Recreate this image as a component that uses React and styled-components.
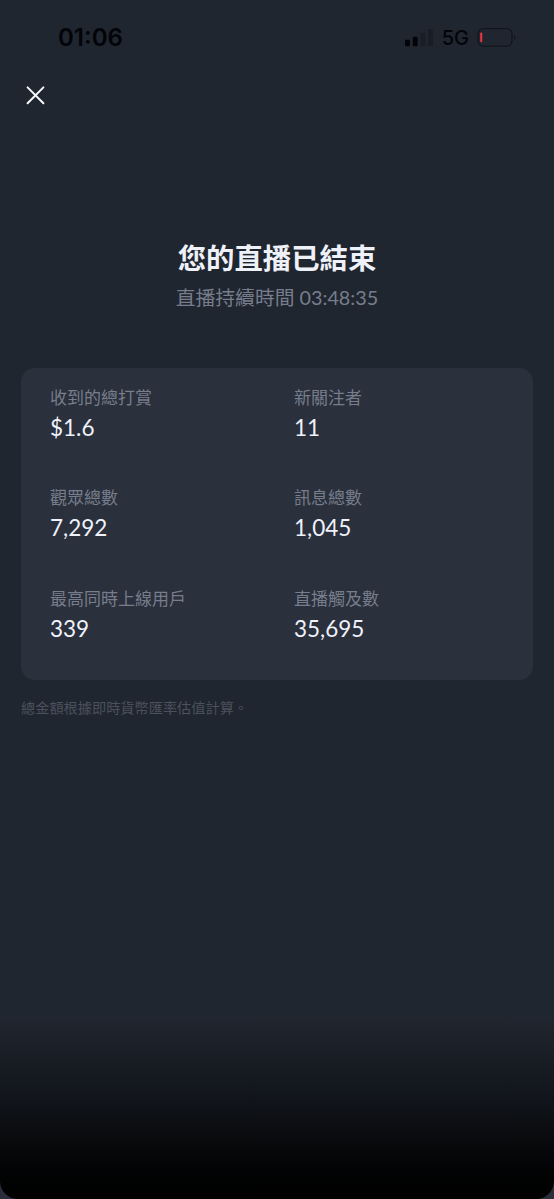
import styled, { createGlobalStyle } from "styled-components";

const GlobalStyle = createGlobalStyle`
  * {
    box-sizing: border-box;
  }
  body {
    margin: 0;
    background: #292d3a;
    font-family: Lato, "Noto Sans CJK TC", sans-serif;
  }
`;

const Screen = styled.main`
  display: flex;
  flex-direction: column;
  height: 1199px;
  overflow: hidden;
  border-radius: 0 0 18px 18px;
  background: linear-gradient(
    to bottom,
    #20262f 0,
    #20262f 1018px,
    #1c2028 1044px,
    #11141b 1100px,
    #090a0c 1142px,
    #020304 1170px,
    #000 1199px
  );
`;

const StatusBar = styled.div`
  display: flex;
  justify-content: space-between;
  align-items: center;
  height: 75px;
  padding: 0 36px 0 58px;
  color: #020409;
  font-family: Inter, sans-serif;
`;

const Clock = styled.span`
  font-size: 24px;
  font-weight: 600;
  line-height: 28px;
`;

const StatusIcons = styled.div`
  display: flex;
  align-items: center;
`;

const Network = styled.span`
  margin: 0 8px 0 8px;
  font-size: 20px;
  font-weight: 500;
  line-height: 24px;
`;

const CloseButton = styled.button`
  display: flex;
  align-self: flex-start;
  margin: 10px 0 0 25px;
  padding: 0;
  border: none;
  background: none;
  color: #f7f8fc;
  cursor: pointer;
`;

const Heading = styled.header`
  margin-top: 133px;
  text-align: center;
`;

const Title = styled.h1`
  margin: 0;
  color: #eff1f9;
  font-size: 28.4px;
  font-weight: 700;
  line-height: 40px;
`;

const Duration = styled.p`
  margin: 5px 0 0;
  color: #777d8c;
  font-size: 19.8px;
  line-height: 28px;
`;

const Stats = styled.dl`
  display: grid;
  grid-template-columns: 244px 1fr;
  grid-auto-rows: 100.3px;
  height: 312px;
  margin: 57px 21px 0;
  padding: 18px 29px 0;
  border-radius: 14px;
  background: #2a303c;
`;

const Label = styled.dt`
  color: #777d8b;
  font-size: 17px;
  line-height: 24px;
`;

const Value = styled.dd`
  margin: 3px 0 0;
  color: #eff2fb;
  font-size: 22.5px;
  line-height: 30px;
`;

const Footnote = styled.p`
  margin: 18px 21px 0;
  color: #4b505d;
  font-size: 14.2px;
  line-height: 20px;
`;

const stats = [
  { label: "收到的總打賞", value: "$1.6" },
  { label: "新關注者", value: "11" },
  { label: "觀眾總數", value: "7,292" },
  { label: "訊息總數", value: "1,045" },
  { label: "最高同時上線用戶", value: "339" },
  { label: "直播觸及數", value: "35,695" }
];

const SignalIcon = () => (
  <svg width="29" height="18" viewBox="0 0 29 18" fill="#020409">
    <rect x="0" y="10.7" width="5" height="6.5" rx="1.3" />
    <rect x="7.7" y="7.7" width="5" height="9.5" rx="1.3" />
    <rect x="15.4" y="3.7" width="5" height="13.5" rx="1.3" opacity="0.25" />
    <rect x="23" y="0" width="5" height="17.2" rx="1.3" opacity="0.25" />
  </svg>
);

const BatteryIcon = () => (
  <svg width="41" height="20" viewBox="0 0 41 20" fill="none">
    <rect
      x="1"
      y="0.7"
      width="34"
      height="17.5"
      rx="5.5"
      stroke="#11161e"
      strokeWidth="1.3"
    />
    <path d="M37 6.9c1.8.7 1.8 4.5 0 5.2z" fill="#11161e" />
    <rect x="3.2" y="4.6" width="2" height="9.6" rx="1" fill="#ee3341" />
  </svg>
);

const App = () => (
  <>
    <GlobalStyle />
    <Screen>
      <StatusBar>
        <Clock>01:06</Clock>
        <StatusIcons>
          <SignalIcon />
          <Network>5G</Network>
          <BatteryIcon />
        </StatusIcons>
      </StatusBar>
      <CloseButton aria-label="關閉">
        <svg width="20" height="20" viewBox="0 0 20 20">
          <path
            d="M2.6 2.4l15.8 15.8M18.4 2.4l-15.8 15.8"
            stroke="currentColor"
            strokeWidth="2"
            strokeLinecap="round"
          />
        </svg>
      </CloseButton>
      <Heading>
        <Title>您的直播已結束</Title>
        <Duration>直播持續時間 03:48:35</Duration>
      </Heading>
      <Stats>
        {stats.map((stat) => (
          <div key={stat.label}>
            <Label>{stat.label}</Label>
            <Value>{stat.value}</Value>
          </div>
        ))}
      </Stats>
      <Footnote>總金額根據即時貨幣匯率估值計算。</Footnote>
    </Screen>
  </>
);

export default App;
